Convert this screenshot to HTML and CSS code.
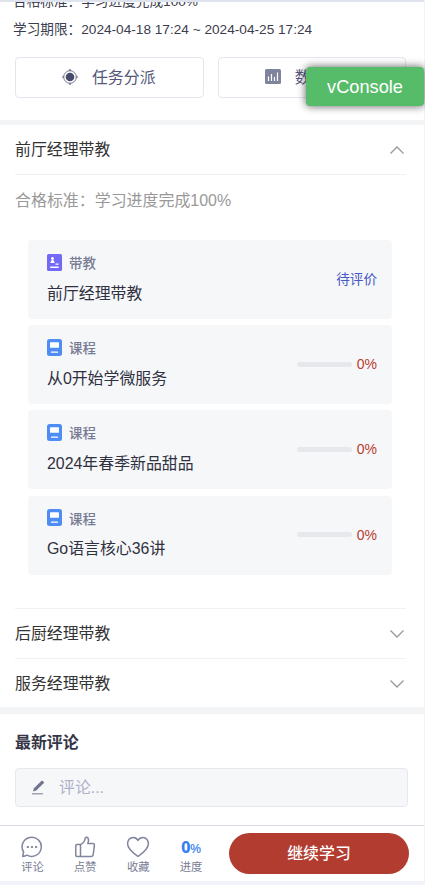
FILE: index.html
```html
<!DOCTYPE html>
<html lang="zh-CN">
<head>
<meta charset="utf-8">
<meta name="viewport" content="width=device-width, initial-scale=1">
<title>学习任务</title>
<link rel="stylesheet" href="styles.css">
</head>
<body>
<svg width="0" height="0" class="defs">
  <symbol id="course" viewBox="0 0 15 17"><rect width="15" height="17" rx="2.5" fill="#4f8df5"/><rect x="3" y="3.2" width="9" height="5.6" rx=".6" fill="#fff"/><path d="M4.5 13.2h6" stroke="#fff" stroke-width="1.3" stroke-linecap="round"/></symbol>
  <symbol id="down" viewBox="0 0 16 10"><path d="M1.500 1.500 8 8l6.500-6.500" fill="none" stroke="#999" stroke-width="1.300"/></symbol>
</svg>
<div class="page">
  <section class="summary">
    <p class="meta">合格标准：学习进度完成100%</p>
    <p class="meta">学习期限：2024-04-18 17:24 ~ 2024-04-25 17:24</p>
    <div class="actions">
      <button class="action">
        <svg width="16" height="16" viewBox="0 0 16 16"><circle cx="8" cy="8" r="6.300" fill="none" stroke="#74778f" stroke-width="1"/><circle cx="8" cy="8" r="4.300" fill="#484c6a"/><path d="M8 0v2M8 14v2M0 8h2M14 8h2" stroke="#5c607c" stroke-width="1.200"/></svg>
        <span>任务分派</span>
      </button>
      <button class="action">
        <svg width="16" height="15" viewBox="0 0 16 15"><rect width="16" height="15" rx="1.500" fill="#7f839c"/><path d="M3.500 7.500v4.500M6.500 5v7M9.500 8v4M12.500 3.500V12" stroke="#fff" stroke-width="1.200"/></svg>
        <span>数据统计</span>
      </button>
    </div>
    <div class="vconsole">vConsole</div>
  </section>

  <section class="stages">
    <div class="stage"><span>前厅经理带教</span><svg class="up" width="16" height="10"><use href="#down"/></svg></div>
    <div class="stage-body">
      <p class="standard">合格标准：学习进度完成100%</p>
      <div class="cards">
        <div class="card">
          <div>
            <div class="kind"><svg width="15" height="17" viewBox="0 0 15 17"><rect width="15" height="17" rx="1.500" fill="#7468f7"/><circle cx="5.500" cy="4.300" r="1.300" fill="#fff"/><path d="M5 5h1l1.800 4H3.200zM8.500 9.500h3v1.300h-3zM3.200 12.600h8.500v1.300H3.200z" fill="#fff"/></svg><span>带教</span></div>
            <div class="name">前厅经理带教</div>
          </div>
          <span class="pending">待评价</span>
        </div>
        <div class="card">
          <div>
            <div class="kind"><svg width="15" height="17"><use href="#course"/></svg><span>课程</span></div>
            <div class="name">从0开始学微服务</div>
          </div>
          <div class="progress"><i></i><span>0%</span></div>
        </div>
        <div class="card">
          <div>
            <div class="kind"><svg width="15" height="17"><use href="#course"/></svg><span>课程</span></div>
            <div class="name">2024年春季新品甜品</div>
          </div>
          <div class="progress"><i></i><span>0%</span></div>
        </div>
        <div class="card">
          <div>
            <div class="kind"><svg width="15" height="17"><use href="#course"/></svg><span>课程</span></div>
            <div class="name">Go语言核心36讲</div>
          </div>
          <div class="progress"><i></i><span>0%</span></div>
        </div>
      </div>
    </div>
    <div class="stage"><span>后厨经理带教</span><svg width="16" height="10"><use href="#down"/></svg></div>
    <div class="stage"><span>服务经理带教</span><svg width="16" height="10"><use href="#down"/></svg></div>
  </section>

  <section class="comments">
    <h2>最新评论</h2>
    <div class="comment-input">
      <svg width="15" height="15" viewBox="0 0 15 15"><path d="M2 11.500 3 8.300 10.300 1q.8-.7 1.600 0l.7.700q.7.800 0 1.600L5.200 10.600z" fill="#70748c"/><path d="M1 13.800h11" stroke="#8b8ea3" stroke-width="1.200"/></svg>
      <span>评论...</span>
    </div>
  </section>

  <nav class="bar">
    <div class="tab"><svg width="22" height="22" viewBox="0 0 22 22"><path d="M1.700 20.400 2.600 16A9.600 9.600 0 1 1 6 19.200Q4 20.300 1.700 20.400z"/><path d="M6.600 11h.6M10.700 11h.6M14.800 11h.6" stroke-width="1.800"/></svg><span>评论</span></div>
    <div class="tab"><svg width="22" height="22" viewBox="0 0 22 22"><path d="M2.800 8.500h3.700V20.500H2.800a1 1 0 0 1-1-1v-10a1 1 0 0 1 1-1zM6.500 8.500c3-1.300 4.300-3.400 4.600-6 .1-1.100 1-1.500 1.800-1.200 1.700.700 1.900 3.500.900 6.200h5.100q1.700 0 1.500 1.800l-1.200 9q-.2 2.200-2.200 2.200H6.500"/></svg><span>点赞</span></div>
    <div class="tab"><svg width="24" height="22" viewBox="0 0 24 22"><path d="M12 20.500C9 18.300 1.600 13.500 1.600 7.800 1.600 4.200 4 1.500 7 1.500c2.200 0 4 1.200 5 2.900 1-1.700 2.800-2.900 5-2.900 3 0 5.400 2.700 5.400 6.300 0 5.700-7.400 10.500-10.400 12.700z"/></svg><span>收藏</span></div>
    <div class="tab"><div class="percent"><b>0</b>%</div><span>进度</span></div>
    <button class="continue">继续学习</button>
  </nav>
</div>
</body>
</html>
```
FILE: styles.css
```css
* { box-sizing: border-box; margin: 0; padding: 0; }
body {
  width: 425px;
  height: 885px;
  overflow: hidden;
  background: #f2f3f9;
  font-family: "Liberation Sans", "Noto Sans CJK SC", sans-serif;
  color: #333;
}
button { font-family: inherit; }
.defs { position: absolute; }
.page {
  display: flex;
  flex-direction: column;
  width: 424px;
  height: 881px;
  border-top: 2px solid #dfe3ee;
  background: #f3f4f6;
}
.page svg { flex: none; }

.summary {
  position: relative;
  display: flex;
  flex-direction: column;
  justify-content: flex-end;
  height: 118px;
  padding: 0 7px 22px 13px;
  background: #fff;
  clip-path: inset(0 -1px 0 0);
}
.meta {
  flex: none;
  height: 28px;
  line-height: 28px;
  font-size: 13.650px;
  color: #3c3d4e;
  white-space: nowrap;
}
.actions { display: flex; flex: none; gap: 14px; padding-left: 2px; margin-top: 13px; }
.action {
  display: flex;
  align-items: center;
  justify-content: center;
  gap: 14px;
  width: 188.500px;
  height: 41px;
  padding: 0 1px 2px 0;
  border: 1.500px solid #e5e5ee;
  border-radius: 4px;
  background: #fff;
  font-size: 15.900px;
  color: #54577a;
}
.action:last-child { width: 188px; padding-right: 0; }
.vconsole {
  position: absolute;
  left: 306px;
  top: 65px;
  width: 118px;
  height: 39px;
  border-radius: 4px;
  background: #57bc6a;
  box-shadow: 0 0 8px rgba(0, 0, 0, .65);
  color: #fff;
  font-size: 18.200px;
  line-height: 40px;
  text-align: center;
}

.stages { height: 582px; margin-top: 5px; padding: 0 18px 0 15px; background: #fff; }
.stage {
  display: flex;
  align-items: center;
  justify-content: space-between;
  height: 50px;
  padding-right: 1px;
  border-bottom: 1px solid #f1f1f3;
  font-size: 15.900px;
}
.stage span { padding-bottom: 3px; }
.stage:last-child { border-bottom: 0; }
.stage:last-child svg { margin-top: -1px; }
.up { transform: rotate(180deg); }
.stage-body { height: 434px; border-bottom: 1px solid #f1f1f3; }
.standard { padding-top: 14px; line-height: 24px; font-size: 15.950px; color: #999; }
.cards { display: flex; flex-direction: column; gap: 6.200px; margin: 27px 14px 0 13px; }
.card {
  display: flex;
  align-items: center;
  justify-content: space-between;
  height: 79px;
  padding: 0 15px 0 19px;
  border-radius: 4px;
  background: #f6f7f9;
}
.kind { display: flex; align-items: center; gap: 7px; height: 22px; font-size: 13.500px; color: #777b93; }
.kind svg { margin-top: 1px; }
.kind span { padding-top: 1px; font-weight: 500; }
.name { margin-top: 4px; height: 32px; line-height: 33px; font-size: 15.900px; color: #303141; }
.pending { padding-bottom: 3px; font-size: 13.600px; color: #4758c8; }
.progress { display: flex; align-items: center; gap: 5px; padding-bottom: 1px; font-size: 14px; color: #b83c31; }
.progress i { width: 55px; height: 5px; border-radius: 3px; background: #e7e8ec; }

.comments { height: 111px; margin-top: 7px; padding: 15px 16px 0 15px; background: #fff; }
.comments h2 { height: 27px; line-height: 27px; font-size: 15.900px; font-weight: 700; color: #343546; }
.comment-input {
  display: flex;
  align-items: center;
  gap: 14px;
  height: 39px;
  margin-top: 12px;
  padding: 0 0 1px 15px;
  border: 1px solid #e6e7ef;
  border-radius: 4px;
  background: #f6f7f9;
  font-size: 15.900px;
  color: #aeb1ca;
}
.comment-input span { padding-bottom: 1px; margin-left: -1px; }

.bar { display: flex; flex: 1; padding: 0 15px 0 6px; border-top: 1px solid #dcdde4; background: #fff; }
.tab {
  display: flex;
  flex-direction: column;
  align-items: center;
  width: 52.900px;
  padding-top: 10px;
  font-size: 11.300px;
  line-height: 18px;
  color: #777b93;
}
.tab svg { height: 22px; fill: none; stroke: #81859d; stroke-width: 1.500; stroke-linejoin: round; stroke-linecap: round; }
.percent { height: 22px; line-height: 22px; font-size: 12px; font-weight: 500; color: #347df4; -webkit-text-stroke: .2px #347df4; }
.percent b { font-family: "Noto Sans", sans-serif; font-size: 16px; }
.continue {
  width: 180px;
  height: 41px;
  margin: 7px 0 0 auto;
  padding-bottom: 3px;
  border: 0;
  border-radius: 21px;
  background: #b13c2f;
  color: #fff;
  font-size: 15.900px;
  font-weight: 500;
}
```
